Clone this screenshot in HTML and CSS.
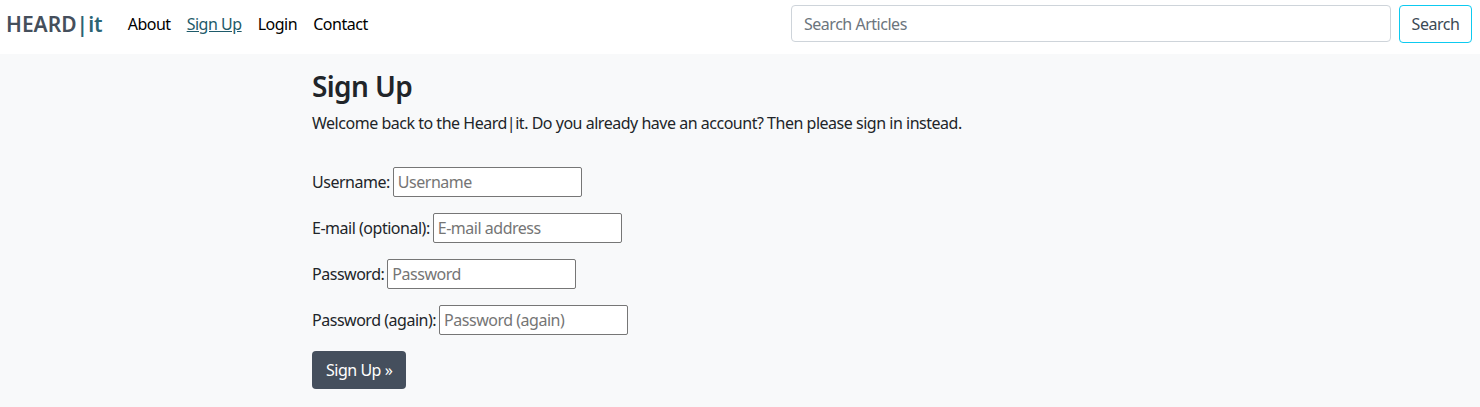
FILE: index.html
```html
<!DOCTYPE html>
<html lang="en">
<head>
<meta charset="utf-8">
<title>Sign Up - HEARD|it</title>
<link rel="stylesheet" href="styles.css">
</head>
<body>
<nav class="navbar">
  <a class="brand" href="#">HEARD<span class="brand-it">|it</span></a>
  <ul class="nav-links">
    <li><a href="#">About</a></li>
    <li><a href="#" class="active">Sign Up</a></li>
    <li><a href="#">Login</a></li>
    <li><a href="#">Contact</a></li>
  </ul>
  <form class="search">
    <input class="search-input" type="search" placeholder="Search Articles">
    <button class="search-btn" type="button">Search</button>
  </form>
</nav>
<main class="main">
  <h2 class="title">Sign Up</h2>
  <p class="intro">Welcome back to the Heard|it. Do you already have an account? Then please sign in instead.</p>
  <form class="signup">
    <p class="row"><label>Username:</label> <input class="field" type="text" placeholder="Username"></p>
    <p class="row"><label>E-mail (optional):</label> <input class="field" type="email" placeholder="E-mail address"></p>
    <p class="row"><label>Password:</label> <input class="field" type="password" placeholder="Password"></p>
    <p class="row"><label>Password (again):</label> <input class="field" type="password" placeholder="Password (again)"></p>
    <button class="submit" type="button">Sign Up »</button>
  </form>
</main>
</body>
</html>
```
FILE: styles.css
```css
* { box-sizing: border-box; }
html, body { margin: 0; }
body {
  font-family: "Noto Sans", "Segoe UI", sans-serif;
  font-size: 16px;
  line-height: 24px;
  letter-spacing: -0.48px;
  color: #212529;
  background: #f8f9fa;
  height: 407px;
}
.navbar {
  display: flex;
  align-items: center;
  height: 54px;
  background: #fff;
  padding: 0 8px 6px 6px;
}
.brand {
  font-size: 21px;
  font-weight: 600;
  letter-spacing: 0;
  color: #454f5c;
  text-decoration: none;
  margin-right: 17px;
}
.brand-it { color: #2b6474; }
.nav-links {
  display: flex;
  list-style: none;
  margin: 0;
  padding: 0;
}
.nav-links a {
  display: block;
  padding: 0 8px;
  color: #000;
  text-decoration: none;
}
.nav-links a.active {
  color: #1e5a6a;
  text-decoration: underline;
}
.search {
  margin-left: auto;
  display: flex;
  gap: 8px;
}
.search-input {
  width: 600px;
  height: 37px;
  border: 1px solid #ced4da;
  border-radius: 4px;
  padding: 6px 12px;
  font: inherit;
  letter-spacing: inherit;
  color: #212529;
  background: #fff;
}
.search-input::placeholder { color: #6c757d; }
.search-btn {
  height: 38px;
  width: 73px;
  border: 1px solid #0dcaf0;
  border-radius: 4px;
  background: #fff;
  font: inherit;
  letter-spacing: inherit;
  color: #3b4a55;
  padding: 0;
}
.main {
  padding: 15px 0 0 312px;
}
.title {
  margin: 0 0 8px;
  font-size: 28px;
  line-height: 34px;
  font-weight: 600;
  letter-spacing: -0.6px;
}
.intro {
  margin: 0 0 32px;
}
.signup .row {
  margin: 0 0 16px;
  height: 30px;
  display: flex;
  align-items: center;
  gap: 3px;
}
.field {
  width: 189px;
  height: 30px;
  border: 1px solid #767676;
  border-radius: 2px;
  padding: 1px 4px;
  font: inherit;
  letter-spacing: inherit;
  background: #fff;
}
.field::placeholder { color: #757575; }
.submit {
  height: 38px;
  padding: 0 14px;
  background: #454f5d;
  color: #fff;
  border: 0;
  border-radius: 4px;
  font: inherit;
  letter-spacing: inherit;
}
```
